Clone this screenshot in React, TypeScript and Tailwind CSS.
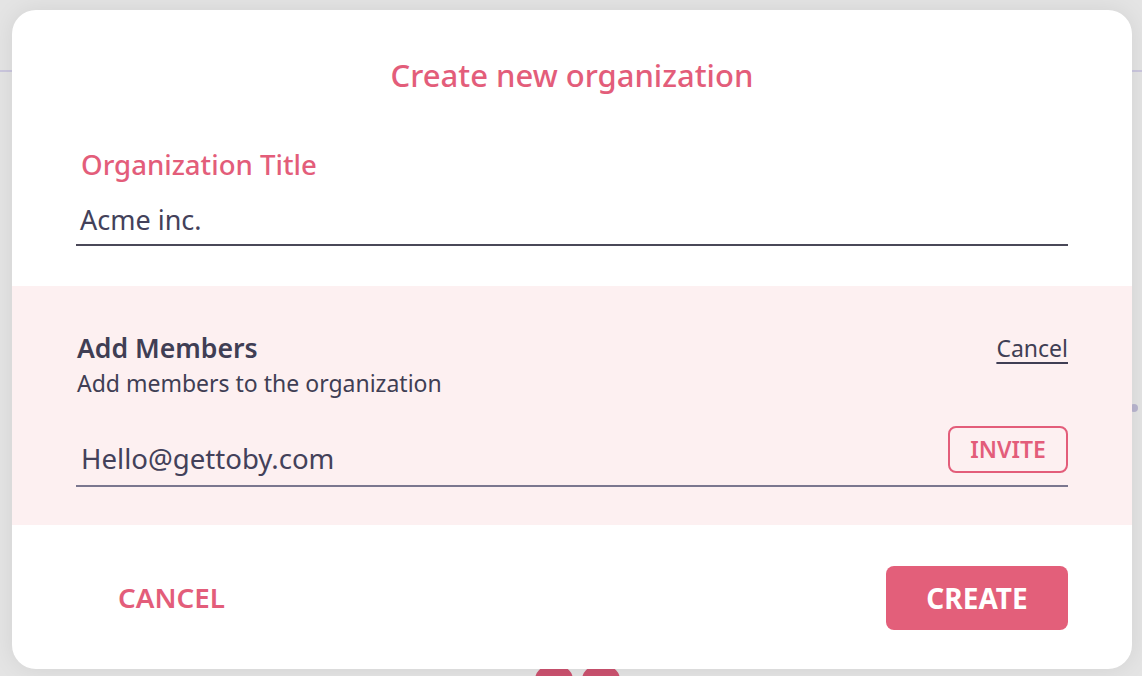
import React from "react";

const font = { fontFamily: '"Noto Sans", "Open Sans", sans-serif' };

function Backdrop() {
  return (
    <>
      {/* page content behind the dialog */}
      <div className="absolute left-0 right-0 top-[70px] h-[2px] bg-[#cbc7de]" />
      <div className="absolute left-[1130px] top-[404px] h-[8px] w-[8px] rounded-full bg-[#b9b5cf]" />
      <div className="absolute left-[535px] top-[666px] h-[20px] w-[38px] rounded-t-[14px] bg-[#cb526f]" />
      <div className="absolute left-[582px] top-[666px] h-[20px] w-[38px] rounded-t-[14px] bg-[#cb526f]" />
    </>
  );
}

export default function App() {
  return (
    <div
      className="relative h-[676px] w-full overflow-hidden bg-[#e4e4e4] pl-[12px] pt-[10px]"
      style={font}
    >
      <Backdrop />

      <div className="relative flex h-[659px] w-[1120px] flex-col overflow-hidden rounded-[24px] bg-white shadow-[0_0_24px_rgba(0,0,0,0.08)]">
        {/* Header */}
        <h1 className="pt-[47px] text-center text-[31px] font-medium leading-[36px] text-[#e35d7a]">
          Create new organization
        </h1>

        {/* Title field */}
        <div className="px-16 pt-[55px]">
          <label className="block pl-[5px] text-[27.6px] font-medium leading-[32px] text-[#e35d7a]">
            Organization Title
          </label>
          <div className="mt-[24px] h-[42px] border-b-2 border-[#4a4858] pl-[4px] text-[27px] leading-[32px] text-[#43415a]">
            Acme inc.
          </div>
        </div>

        {/* Members */}
        <div className="mt-[40px] h-[239px] bg-[#fdf0f1] px-16 pt-[46px]">
          <div className="flex items-center justify-between">
            <h2 className="pl-[1px] text-[26.6px] font-semibold leading-[32px] text-[#403e54]">
              Add Members
            </h2>
            <button className="text-[23px] leading-[32px] text-[#403e54] underline decoration-[2px] underline-offset-[5px]">
              Cancel
            </button>
          </div>
          <p className="mt-[5px] pl-[1px] text-[23px] leading-[28px] text-[#403e54]">
            Add members to the organization
          </p>
          <div className="mt-[29px] flex h-[61px] items-start justify-between border-b-2 border-[#7b778f]">
            <span className="mt-[16px] pl-[5px] text-[27.6px] leading-[32px] text-[#43415a]">
              Hello@gettoby.com
            </span>
            <button className="flex h-[47px] w-[120px] items-center justify-center rounded-[8px] border-2 border-[#e35d7a] text-[23px] font-semibold text-[#e35d7a]">
              INVITE
            </button>
          </div>
        </div>

        {/* Footer */}
        <div className="flex items-start justify-between px-16 pt-[41px]">
          <button className="flex h-[64px] items-center pl-[42px] text-[27.8px] font-semibold text-[#e35d7a]">
            CANCEL
          </button>
          <button className="flex h-[64px] w-[182px] items-center justify-center rounded-[8px] bg-[#e35f7a] text-[28px] font-bold text-white">
            CREATE
          </button>
        </div>
      </div>
    </div>
  );
}
